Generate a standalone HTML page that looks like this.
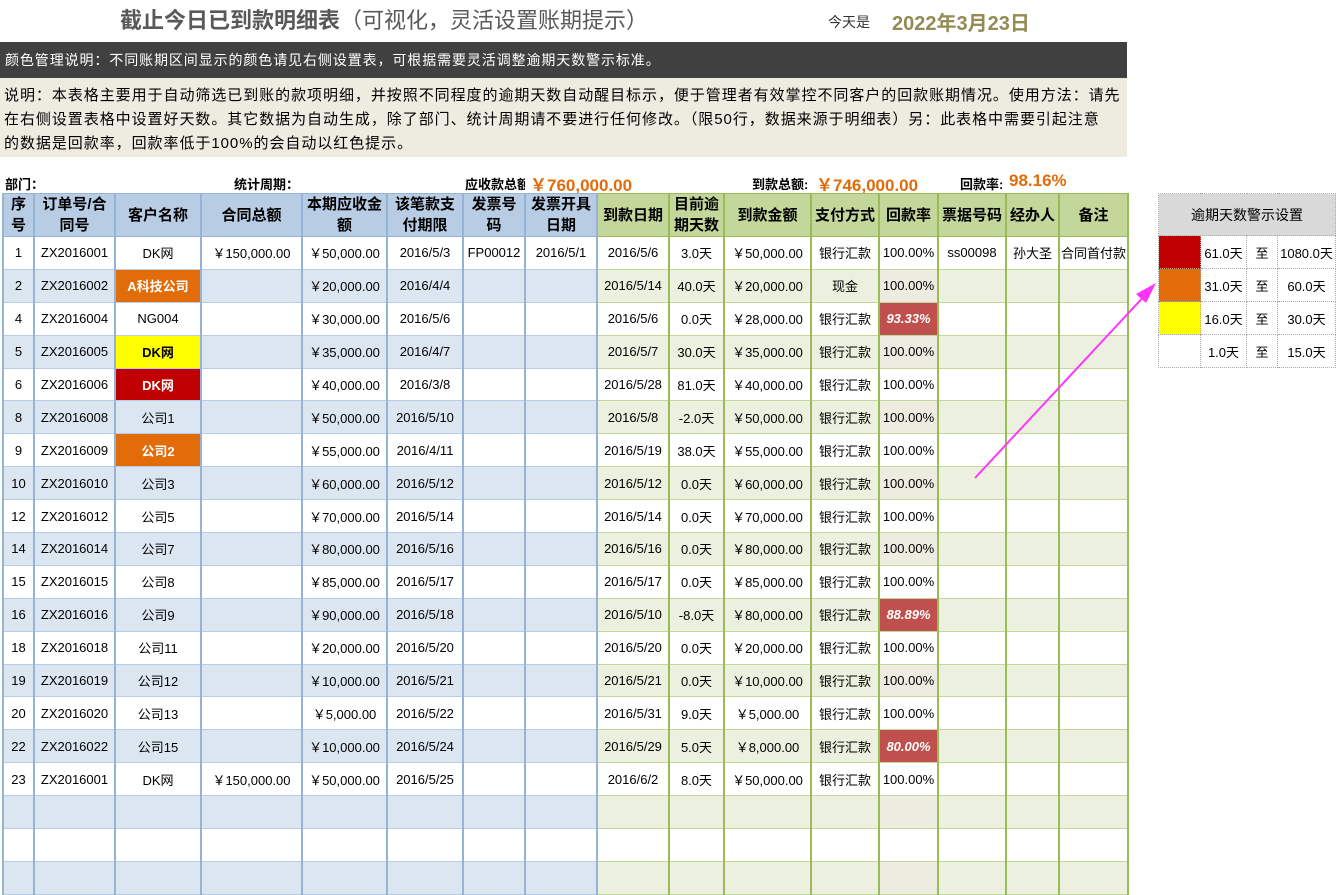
<!DOCTYPE html>
<html><head><meta charset="utf-8"><style>
*{margin:0;padding:0;box-sizing:border-box}
body{width:1340px;height:875px;overflow:hidden;background:#fff;font-family:"Liberation Sans","Noto Sans CJK SC",sans-serif;color:#000;position:relative}
.a{position:absolute;white-space:nowrap}
table{border-collapse:collapse;table-layout:fixed;position:absolute}
#t{left:2px;top:193px}
#t td{height:32.9px;font-size:13px;text-align:center;border-top:1px solid #b8cce4;border-bottom:1px solid #b8cce4;border-left:2px solid #95b3d7;border-right:2px solid #95b3d7;overflow:hidden;white-space:nowrap;padding:0}
#t tr.h td{height:42px;font-size:15px;font-weight:bold;line-height:21px;white-space:normal;background:#b8cce4;border-color:#95b3d7;padding:0 2px}
#t td.g{border-top-color:#c4d79b;border-bottom-color:#c4d79b;border-left-color:#9bbb59;border-right-color:#9bbb59}
#t tr.h td.g{background:#c4d79b;border-color:#9bbb59}
#t tr.c td{background:#dce6f1}
#t tr.c td.g{background:#ebf1de}
#t tr.c td.r{background:#eeece1}
#t td.red{background:#c0504d!important;color:#fff;font-style:italic;font-weight:bold}
.o{background:#e26b0a!important;color:#fff;font-weight:bold}
.y{background:#ffff00!important;font-weight:bold}
.d{background:#c00000!important;color:#fff;font-weight:bold}
#s{left:1158px;top:193px}
#s td{border:1px dotted #aaa;font-size:13px;text-align:center;height:33px}
</style></head><body>
<div class="a" style="left:120px;top:6px;font-size:22px;color:#595959;line-height:30px"><b>截止今日已到款明细表</b>（可视化，灵活设置账期提示）</div>
<div class="a" style="left:828px;top:12px;font-size:14px;color:#333">今天是</div>
<div class="a" style="left:892px;top:7px;font-size:20px;font-weight:bold;color:#948a54">2022年3月23日</div>
<div class="a" style="left:0;top:42px;width:1127px;height:36px;background:#404040;color:#fff;font-size:14px;line-height:36px;padding-left:5px;letter-spacing:0.9px">颜色管理说明：不同账期区间显示的颜色请见右侧设置表，可根据需要灵活调整逾期天数警示标准。</div>
<div class="a" style="left:0;top:78px;width:1127px;height:79px;background:#eeece1;font-size:15px;line-height:24px;padding:6px 4px;overflow:hidden;letter-spacing:0.95px">说明：本表格主要用于自动筛选已到账的款项明细，并按照不同程度的逾期天数自动醒目标示，便于管理者有效掌控不同客户的回款账期情况。使用方法：请先<br>在右侧设置表格中设置好天数。其它数据为自动生成，除了部门、统计周期请不要进行任何修改。（限50行，数据来源于明细表）另：此表格中需要引起注意<br>的数据是回款率，回款率低于100%的会自动以红色提示。</div>
<div class="a" style="left:5px;top:174px;font-size:13px;font-weight:bold">部门：</div>
<div class="a" style="left:234px;top:174px;font-size:13px;font-weight:bold">统计周期：</div>
<div class="a" style="left:465px;top:174px;width:60px;overflow:hidden;font-size:13px;font-weight:bold">应收款总额</div>
<div class="a" style="left:530px;top:171px;font-size:17px;font-weight:bold;color:#e26b0a">￥760,000.00</div>
<div class="a" style="left:752px;top:174px;font-size:13px;font-weight:bold">到款总额:</div>
<div class="a" style="left:816px;top:171px;font-size:17px;font-weight:bold;color:#e26b0a">￥746,000.00</div>
<div class="a" style="left:960px;top:174px;font-size:13px;font-weight:bold">回款率:</div>
<div class="a" style="left:1009px;top:171px;font-size:17px;font-weight:bold;color:#e26b0a">98.16%</div>

<table id="t">
<colgroup><col style="width:31px"><col style="width:81px"><col style="width:86px"><col style="width:101px"><col style="width:85px"><col style="width:76px"><col style="width:62px"><col style="width:72px"><col style="width:72px"><col style="width:55px"><col style="width:87px"><col style="width:68px"><col style="width:59px"><col style="width:68px"><col style="width:53px"><col style="width:69px"></colgroup>
<tr class="h"><td>序号</td><td>订单号/合同号</td><td>客户名称</td><td>合同总额</td><td>本期应收金额</td><td>该笔款支付期限</td><td>发票号码</td><td>发票开具日期</td><td class="g">到款日期</td><td class="g">目前逾期天数</td><td class="g">到款金额</td><td class="g">支付方式</td><td class="g">回款率</td><td class="g">票据号码</td><td class="g">经办人</td><td class="g">备注</td></tr>
<tr><td>1</td><td>ZX2016001</td><td>DK网</td><td>￥150,000.00</td><td>￥50,000.00</td><td>2016/5/3</td><td>FP00012</td><td>2016/5/1</td><td class="g">2016/5/6</td><td class="g">3.0天</td><td class="g">￥50,000.00</td><td class="g">银行汇款</td><td class="g r">100.00%</td><td class="g">ss00098</td><td class="g">孙大圣</td><td class="g">合同首付款</td></tr>
<tr class="c"><td>2</td><td>ZX2016002</td><td class="o">A科技公司</td><td></td><td>￥20,000.00</td><td>2016/4/4</td><td></td><td></td><td class="g">2016/5/14</td><td class="g">40.0天</td><td class="g">￥20,000.00</td><td class="g">现金</td><td class="g r">100.00%</td><td class="g"></td><td class="g"></td><td class="g"></td></tr>
<tr><td>4</td><td>ZX2016004</td><td>NG004</td><td></td><td>￥30,000.00</td><td>2016/5/6</td><td></td><td></td><td class="g">2016/5/6</td><td class="g">0.0天</td><td class="g">￥28,000.00</td><td class="g">银行汇款</td><td class="g red">93.33%</td><td class="g"></td><td class="g"></td><td class="g"></td></tr>
<tr class="c"><td>5</td><td>ZX2016005</td><td class="y">DK网</td><td></td><td>￥35,000.00</td><td>2016/4/7</td><td></td><td></td><td class="g">2016/5/7</td><td class="g">30.0天</td><td class="g">￥35,000.00</td><td class="g">银行汇款</td><td class="g r">100.00%</td><td class="g"></td><td class="g"></td><td class="g"></td></tr>
<tr><td>6</td><td>ZX2016006</td><td class="d">DK网</td><td></td><td>￥40,000.00</td><td>2016/3/8</td><td></td><td></td><td class="g">2016/5/28</td><td class="g">81.0天</td><td class="g">￥40,000.00</td><td class="g">银行汇款</td><td class="g r">100.00%</td><td class="g"></td><td class="g"></td><td class="g"></td></tr>
<tr class="c"><td>8</td><td>ZX2016008</td><td>公司1</td><td></td><td>￥50,000.00</td><td>2016/5/10</td><td></td><td></td><td class="g">2016/5/8</td><td class="g">-2.0天</td><td class="g">￥50,000.00</td><td class="g">银行汇款</td><td class="g r">100.00%</td><td class="g"></td><td class="g"></td><td class="g"></td></tr>
<tr><td>9</td><td>ZX2016009</td><td class="o">公司2</td><td></td><td>￥55,000.00</td><td>2016/4/11</td><td></td><td></td><td class="g">2016/5/19</td><td class="g">38.0天</td><td class="g">￥55,000.00</td><td class="g">银行汇款</td><td class="g r">100.00%</td><td class="g"></td><td class="g"></td><td class="g"></td></tr>
<tr class="c"><td>10</td><td>ZX2016010</td><td>公司3</td><td></td><td>￥60,000.00</td><td>2016/5/12</td><td></td><td></td><td class="g">2016/5/12</td><td class="g">0.0天</td><td class="g">￥60,000.00</td><td class="g">银行汇款</td><td class="g r">100.00%</td><td class="g"></td><td class="g"></td><td class="g"></td></tr>
<tr><td>12</td><td>ZX2016012</td><td>公司5</td><td></td><td>￥70,000.00</td><td>2016/5/14</td><td></td><td></td><td class="g">2016/5/14</td><td class="g">0.0天</td><td class="g">￥70,000.00</td><td class="g">银行汇款</td><td class="g r">100.00%</td><td class="g"></td><td class="g"></td><td class="g"></td></tr>
<tr class="c"><td>14</td><td>ZX2016014</td><td>公司7</td><td></td><td>￥80,000.00</td><td>2016/5/16</td><td></td><td></td><td class="g">2016/5/16</td><td class="g">0.0天</td><td class="g">￥80,000.00</td><td class="g">银行汇款</td><td class="g r">100.00%</td><td class="g"></td><td class="g"></td><td class="g"></td></tr>
<tr><td>15</td><td>ZX2016015</td><td>公司8</td><td></td><td>￥85,000.00</td><td>2016/5/17</td><td></td><td></td><td class="g">2016/5/17</td><td class="g">0.0天</td><td class="g">￥85,000.00</td><td class="g">银行汇款</td><td class="g r">100.00%</td><td class="g"></td><td class="g"></td><td class="g"></td></tr>
<tr class="c"><td>16</td><td>ZX2016016</td><td>公司9</td><td></td><td>￥90,000.00</td><td>2016/5/18</td><td></td><td></td><td class="g">2016/5/10</td><td class="g">-8.0天</td><td class="g">￥80,000.00</td><td class="g">银行汇款</td><td class="g red">88.89%</td><td class="g"></td><td class="g"></td><td class="g"></td></tr>
<tr><td>18</td><td>ZX2016018</td><td>公司11</td><td></td><td>￥20,000.00</td><td>2016/5/20</td><td></td><td></td><td class="g">2016/5/20</td><td class="g">0.0天</td><td class="g">￥20,000.00</td><td class="g">银行汇款</td><td class="g r">100.00%</td><td class="g"></td><td class="g"></td><td class="g"></td></tr>
<tr class="c"><td>19</td><td>ZX2016019</td><td>公司12</td><td></td><td>￥10,000.00</td><td>2016/5/21</td><td></td><td></td><td class="g">2016/5/21</td><td class="g">0.0天</td><td class="g">￥10,000.00</td><td class="g">银行汇款</td><td class="g r">100.00%</td><td class="g"></td><td class="g"></td><td class="g"></td></tr>
<tr><td>20</td><td>ZX2016020</td><td>公司13</td><td></td><td>￥5,000.00</td><td>2016/5/22</td><td></td><td></td><td class="g">2016/5/31</td><td class="g">9.0天</td><td class="g">￥5,000.00</td><td class="g">银行汇款</td><td class="g r">100.00%</td><td class="g"></td><td class="g"></td><td class="g"></td></tr>
<tr class="c"><td>22</td><td>ZX2016022</td><td>公司15</td><td></td><td>￥10,000.00</td><td>2016/5/24</td><td></td><td></td><td class="g">2016/5/29</td><td class="g">5.0天</td><td class="g">￥8,000.00</td><td class="g">银行汇款</td><td class="g red">80.00%</td><td class="g"></td><td class="g"></td><td class="g"></td></tr>
<tr><td>23</td><td>ZX2016001</td><td>DK网</td><td>￥150,000.00</td><td>￥50,000.00</td><td>2016/5/25</td><td></td><td></td><td class="g">2016/6/2</td><td class="g">8.0天</td><td class="g">￥50,000.00</td><td class="g">银行汇款</td><td class="g r">100.00%</td><td class="g"></td><td class="g"></td><td class="g"></td></tr>
<tr class="c"><td></td><td></td><td></td><td></td><td></td><td></td><td></td><td></td><td class="g"></td><td class="g"></td><td class="g"></td><td class="g"></td><td class="g r"></td><td class="g"></td><td class="g"></td><td class="g"></td></tr>
<tr><td></td><td></td><td></td><td></td><td></td><td></td><td></td><td></td><td class="g"></td><td class="g"></td><td class="g"></td><td class="g"></td><td class="g r"></td><td class="g"></td><td class="g"></td><td class="g"></td></tr>
<tr class="c"><td></td><td></td><td></td><td></td><td></td><td></td><td></td><td></td><td class="g"></td><td class="g"></td><td class="g"></td><td class="g"></td><td class="g r"></td><td class="g"></td><td class="g"></td><td class="g"></td></tr>
</table>

<table id="s">
<colgroup><col style="width:42px"><col style="width:46px"><col style="width:31px"><col style="width:58px"></colgroup>
<tr><td colspan="4" style="height:42px;background:#d9d9d9;font-size:14px">逾期天数警示设置</td></tr>
<tr><td style="background:#c00000"></td><td>61.0天</td><td>至</td><td>1080.0天</td></tr>
<tr><td style="background:#e26b0a"></td><td>31.0天</td><td>至</td><td>60.0天</td></tr>
<tr><td style="background:#ffff00"></td><td>16.0天</td><td>至</td><td>30.0天</td></tr>
<tr><td></td><td>1.0天</td><td>至</td><td>15.0天</td></tr>
</table>

<svg class="a" style="left:0;top:0" width="1340" height="875">
<line x1="975" y1="478" x2="1148" y2="292" stroke="#ff33ff" stroke-width="2"/>
<polygon points="1156,283 1136,294 1146,303" fill="#ff33ff"/>
</svg>
</body></html>
